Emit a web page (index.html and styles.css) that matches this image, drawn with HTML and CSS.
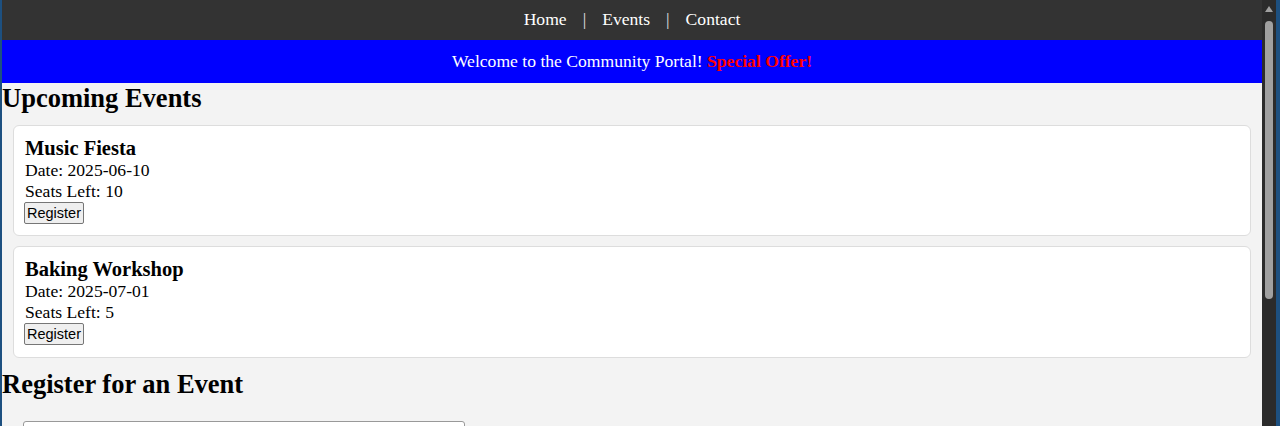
FILE: index.html
```html
<!DOCTYPE html>
<html lang="en">
<head>
<meta charset="utf-8">
<title>Community Portal</title>
<link rel="stylesheet" href="styles.css">
</head>
<body>
<div class="window">
  <div class="edge edge-left"></div>
  <div class="page">
    <nav class="topnav">
      <a href="#">Home</a>
      <span class="sep">|</span>
      <a href="#">Events</a>
      <span class="sep">|</span>
      <a href="#">Contact</a>
    </nav>
    <div class="banner">Welcome to the Community Portal! <span class="offer">Special Offer!</span></div>
    <main>
      <h2 class="section-title">Upcoming Events</h2>
      <div class="card card-first">
        <h3 class="card-title">Music Fiesta</h3>
        <p class="line">Date: 2025-06-10</p>
        <p class="line">Seats Left: 10</p>
        <button class="btn">Register</button>
      </div>
      <div class="card card-last">
        <h3 class="card-title">Baking Workshop</h3>
        <p class="line">Date: 2025-07-01</p>
        <p class="line">Seats Left: 5</p>
        <button class="btn">Register</button>
      </div>
      <h2 class="section-title">Register for an Event</h2>
      <form class="reg-form">
        <input class="field" type="text">
      </form>
    </main>
  </div>
  <div class="scrollbar">
    <div class="arrow"></div>
    <div class="thumb"></div>
  </div>
  <div class="edge edge-right"></div>
</div>
</body>
</html>
```
FILE: styles.css
```css
html, body {
  margin: 0;
  padding: 0;
  height: 426px;
  overflow: hidden;
}
body {
  font-family: "Liberation Serif", "Times New Roman", serif;
  font-size: 17.6px;
  color: #000;
}
.window {
  display: flex;
  height: 426px;
}
.edge {
  background: #1d5080;
}
.edge-left { width: 2px; }
.edge-right { width: 4px; }
.page {
  flex: 1;
  background: #f3f3f3;
  overflow: hidden;
}
.topnav {
  height: 40px;
  background: #333333;
  display: flex;
  justify-content: center;
  align-items: center;
  gap: 16px;
  line-height: 21px;
  padding-bottom: 1px;
  box-sizing: border-box;
}
.topnav a {
  color: #ffffff;
  text-decoration: none;
}
.topnav .sep {
  color: #e0e0e0;
}
.banner {
  background: #0000ff;
  color: #ffffff;
  text-align: center;
  line-height: 21px;
  padding: 11px 0;
}
.offer {
  color: #ff0000;
  font-weight: bold;
}
.section-title {
  margin: 0;
  font-size: 26.5px;
  line-height: 31px;
  font-weight: bold;
}
.card {
  background: #ffffff;
  border: 1px solid #dddddd;
  border-radius: 6px;
  margin: 10px 11px;
  padding: 11px;
}
.card-first {
  margin-top: 11px;
}
.card-last {
  padding-bottom: 12px;
  margin-bottom: 11px;
}
.card-title {
  margin: 0;
  font-size: 20.5px;
  line-height: 23px;
  font-weight: bold;
}
.line {
  margin: 0;
  line-height: 21px;
}
.btn {
  display: block;
  font-family: "Liberation Sans", Arial, sans-serif;
  font-size: 14.5px;
  color: #000;
  background: #efefef;
  border: 1px solid #767676;
  border-radius: 2px;
  padding: 1px 2px;
  height: 22px;
  line-height: 18px;
  margin: 0 0 0 -1px;
}
.reg-form {
  padding: 21px 0 0 21px;
}
.field {
  display: block;
  box-sizing: border-box;
  width: 442px;
  height: 32px;
  border: 1px solid #999;
  border-radius: 3px;
  background: #fff;
  margin: 0;
}
.scrollbar {
  width: 14px;
  background: #2b2b2b;
  display: flex;
  flex-direction: column;
  align-items: center;
  padding-top: 6px;
  box-sizing: border-box;
}
.arrow {
  width: 0;
  height: 0;
  border-left: 4px solid transparent;
  border-right: 4px solid transparent;
  border-bottom: 6px solid #a0a0a0;
}
.thumb {
  margin-top: 9px;
  width: 8px;
  height: 278px;
  border-radius: 4px;
  background: #a0a0a0;
}
```
